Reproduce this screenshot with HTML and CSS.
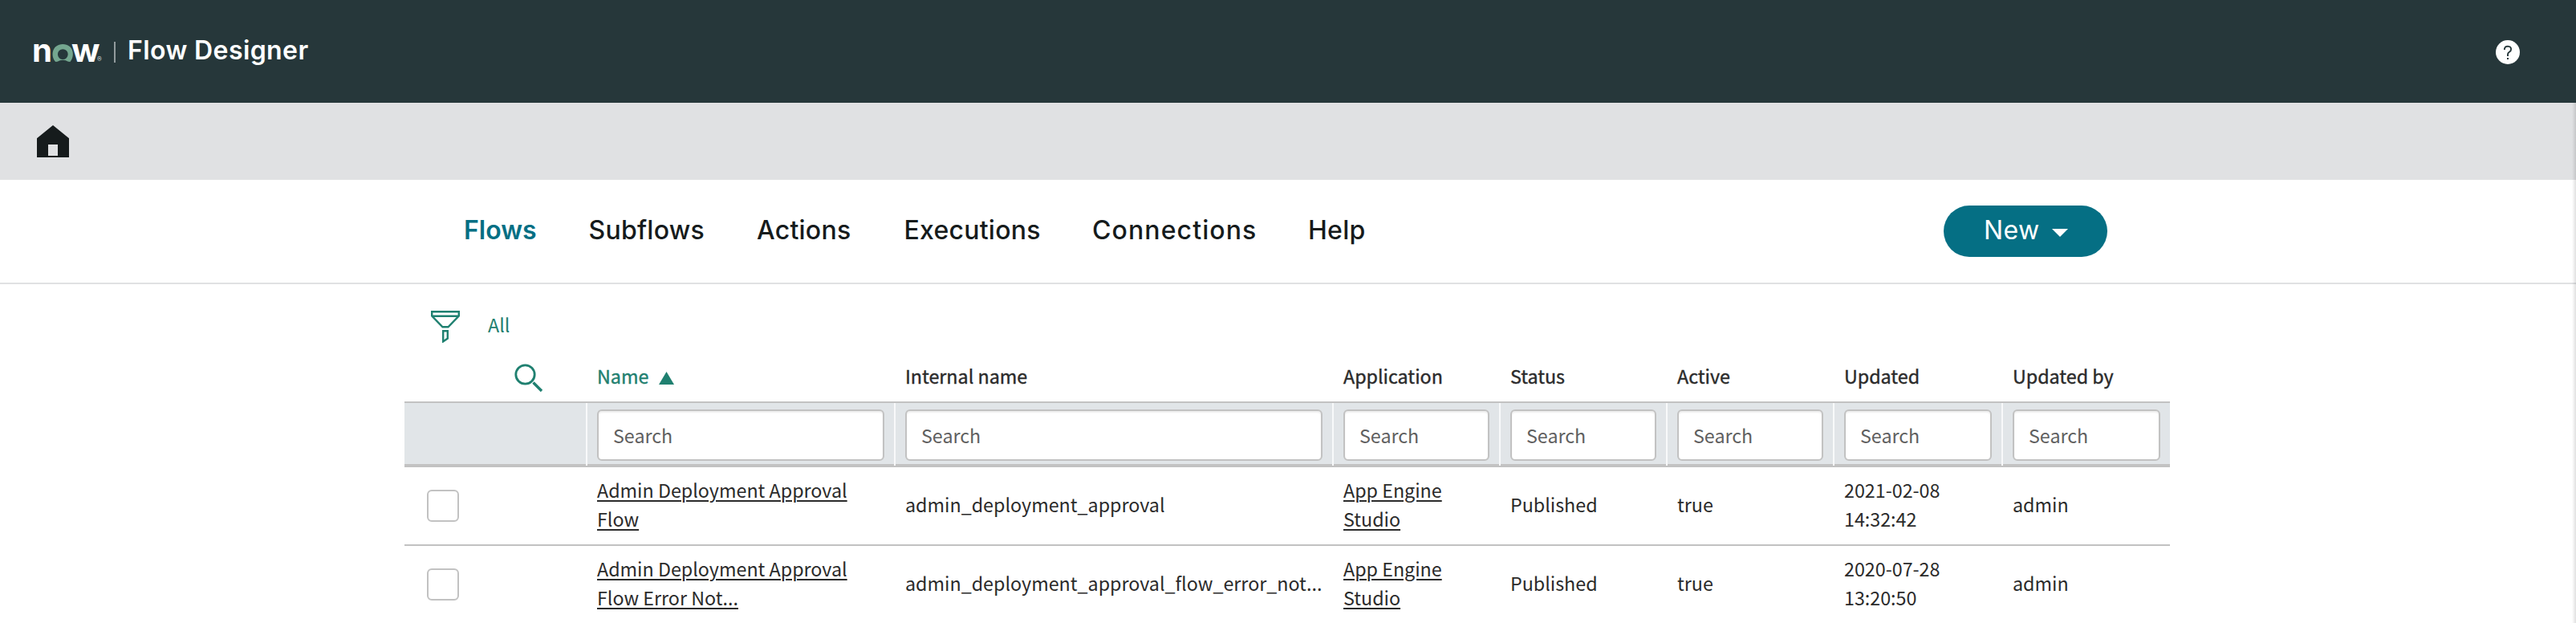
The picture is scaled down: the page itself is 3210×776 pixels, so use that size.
FILE: index.html
```html
<!DOCTYPE html>
<html lang="en">
<head>
<meta charset="utf-8">
<title>Flow Designer</title>
<link rel="stylesheet" href="styles.css">
</head>
<body>
<div class="app">
  <header class="banner">
    <div class="brand">
      <svg class="logo" width="90" height="40" viewBox="0 0 90 40">
        <text class="logo-letter" x="-2" y="27" textLength="25" lengthAdjust="spacingAndGlyphs">n</text>
        <path d="M27.2 27 C20.5 19.5 23 5 36.3 5 C49.5 5 52 19.5 45.4 27 L43 26.8 Q36.3 22.6 29.6 26.8 Z M36.3 11.2 A6.4 6.4 0 1 0 36.3 24 A6.4 6.4 0 1 0 36.3 11.2 Z" fill="#74a68f" fill-rule="evenodd"/>
        <text class="logo-letter" x="47" y="27" textLength="35.5" lengthAdjust="spacingAndGlyphs">w</text>
        <text class="logo-mark" x="79" y="27">®</text>
      </svg>
      <span class="brand-rule"></span>
      <h1 class="brand-title">Flow Designer</h1>
    </div>
    <svg class="help" width="30" height="30" viewBox="0 0 30 30">
      <circle cx="15" cy="15" r="15" fill="#fff"/>
      <path d="M10.9 12 V11.2 Q11.3 7.6 15 7.6 Q19.1 7.8 19.1 11.2 Q19.1 13.2 17.2 14.5 Q15 15.9 15 17.6 V20" fill="none" stroke="#26373a" stroke-width="1.9"/>
      <rect x="14" y="22" width="2" height="2" fill="#26373a"/>
    </svg>
  </header>

  <main class="workspace">
    <div class="tabstrip">
      <svg width="40" height="40" viewBox="0 0 40 40">
        <path d="M20 0 L40 16.3 V40 H0 V16.3 Z M14 24 V38 H26 V24 Z" fill="#161b1c" fill-rule="evenodd"/>
      </svg>
    </div>

    <div class="navbar">
      <nav class="tabs">
        <a class="tab tab-active">Flows</a>
        <a class="tab">Subflows</a>
        <a class="tab">Actions</a>
        <a class="tab">Executions</a>
        <a class="tab tab-connections">Connections</a>
        <a class="tab">Help</a>
      </nav>
      <button class="new-button">New
        <svg width="20" height="10" viewBox="0 0 20 10"><path d="M0 0 H20 L10 10 Z" fill="#fff"/></svg>
      </button>
    </div>

    <section class="list">
      <div class="filterbar">
        <svg width="36" height="40" viewBox="0 0 36 40" fill="none" stroke="#1f8070" stroke-width="2.4">
          <path d="M1.2 1.2 H34.8 V6.5 L21.5 20.3 H14.5 L1.2 6.5 Z M1.5 6.7 H34.5"/>
          <path d="M15.2 25.2 H20.8 V34.5 L15.2 38.4 Z"/>
        </svg>
        <a class="filter-all">All</a>
      </div>

      <div class="row head">
        <div class="cell search-toggle">
          <svg width="36" height="36" viewBox="0 0 36 36" fill="none" stroke="#1f8070">
            <circle cx="13.5" cy="13.5" r="11.7" stroke-width="2.8"/>
            <path d="M23.5 23.5 L34 34" stroke-width="3.4"/>
          </svg>
        </div>
        <div class="cell sorted">Name
          <svg width="19" height="16" viewBox="0 0 19 16"><path d="M9.5 0 L19 16 H0 Z" fill="#1f8070"/></svg>
        </div>
        <div class="cell">Internal name</div>
        <div class="cell">Application</div>
        <div class="cell">Status</div>
        <div class="cell">Active</div>
        <div class="cell">Updated</div>
        <div class="cell">Updated by</div>
      </div>

      <div class="row search">
        <div class="cell"></div>
        <div class="cell"><input class="field" placeholder="Search"></div>
        <div class="cell"><input class="field" placeholder="Search"></div>
        <div class="cell"><input class="field" placeholder="Search"></div>
        <div class="cell"><input class="field" placeholder="Search"></div>
        <div class="cell"><input class="field" placeholder="Search"></div>
        <div class="cell"><input class="field" placeholder="Search"></div>
        <div class="cell"><input class="field" placeholder="Search"></div>
      </div>

      <div class="row record">
        <div class="cell pick"><span class="checkbox"></span></div>
        <div class="cell"><a class="link">Admin Deployment Approval<br>Flow</a></div>
        <div class="cell">admin_deployment_approval</div>
        <div class="cell"><a class="link">App Engine<br>Studio</a></div>
        <div class="cell">Published</div>
        <div class="cell">true</div>
        <div class="cell"><span>2021-02-08<br>14:32:42</span></div>
        <div class="cell">admin</div>
      </div>

      <div class="row record">
        <div class="cell pick"><span class="checkbox"></span></div>
        <div class="cell"><a class="link">Admin Deployment Approval<br>Flow Error Not...</a></div>
        <div class="cell">admin_deployment_approval_flow_error_not...</div>
        <div class="cell"><a class="link">App Engine<br>Studio</a></div>
        <div class="cell">Published</div>
        <div class="cell">true</div>
        <div class="cell"><span>2020-07-28<br>13:20:50</span></div>
        <div class="cell">admin</div>
      </div>
    </section>
    <div class="edge-shadow"></div>
  </main>
</div>
</body>
</html>
```
FILE: styles.css
```css
* { box-sizing: border-box; }

body {
  margin: 0;
  background: #fff;
  color: #2b2b2b;
  font: 23.27px/36px "Noto Sans CJK SC", "Open Sans", sans-serif;
}

svg { display: block; flex: none; }

.app { height: 776px; overflow: hidden; }

/* Banner */
.banner {
  display: flex;
  justify-content: space-between;
  height: 128px;
  padding: 50px 70px 0 42px;
  background: #26373a;
}
.brand { display: flex; align-items: flex-start; }
.logo { overflow: visible; }
.logo-letter { font: 700 39.5px Inter, sans-serif; fill: #fff; }
.logo-mark { font: 8.5px Inter, sans-serif; fill: #c8cfd0; }
.brand-rule { width: 2px; height: 26px; margin: 2px 15px 0 10px; background: #929b9d; }
.brand-title {
  margin: -7px 0 0;
  color: #fff;
  font: 600 32px/40px Inter, sans-serif;
  letter-spacing: .4px;
}

/* Open-tab strip */
.workspace { position: relative; height: 648px; }
.tabstrip { height: 96px; padding: 28px 46px; background: #e0e1e3; }
.edge-shadow {
  position: absolute;
  top: 0;
  right: 0;
  bottom: 0;
  width: 5px;
  background: linear-gradient(to right, rgba(0, 0, 0, 0), rgba(0, 0, 0, .12));
}

/* Navigation */
.navbar {
  display: flex;
  align-items: center;
  justify-content: space-between;
  height: 130px;
  padding: 0 584px 0 578px;
  border-bottom: 2px solid #e0e1e3;
}
.tabs {
  display: grid;
  grid-template-columns: 155.5px 209.5px 183.5px 234.5px 269px auto;
  padding-bottom: 3px;
  color: #161b1c;
  font: 500 32px/40px Inter, sans-serif;
}
.tab { letter-spacing: .25px; }
.tab-active { color: #056f84; font-weight: 600; letter-spacing: 0; }
.tab-connections { letter-spacing: 1.1px; }
.new-button {
  display: flex;
  align-items: center;
  gap: 15px;
  width: 204px;
  height: 64px;
  padding: 0 0 2px 50px;
  border: 0;
  border-radius: 32px;
  background: #056f84;
  color: #fff;
  font: 400 32px/40px Inter, sans-serif;
  letter-spacing: .4px;
}
.new-button svg { margin-top: 5px; }

/* List */
.list { width: 2200px; margin-left: 504px; }
.filterbar {
  display: flex;
  align-items: center;
  gap: 35px;
  height: 86px;
  padding: 20px 0 0 33px;
  color: #1f8070;
}
.filter-all { margin-top: -7px; }

.row {
  display: grid;
  grid-template-columns: 228px 384px 546px 208px 208px 208px 210px 208px;
}
.cell { display: flex; align-items: center; padding-left: 12px; white-space: nowrap; }

.head { height: 60px; -webkit-text-stroke: .4px currentColor; }
.head .cell { padding-bottom: 4px; }
.head .search-toggle { padding: 1px 0 0 137px; }
.head .sorted { gap: 13px; color: #1f8070; }
.sorted svg { margin-top: 6px; }

.search {
  height: 82px;
  border-top: 2px solid #c2c2c2;
  border-bottom: 2px solid #c2c2c2;
  background: #e1e5e8;
}
.search .cell {
  align-items: flex-start;
  padding: 8px 12px 0 12px;
  border-right: 2px solid #f8f9fa;
  background: linear-gradient(#c2c2c2, #c2c2c2) bottom / 100% 2px no-repeat;
}
.search .cell:last-child { border-right: 0; }
.field {
  width: 100%;
  height: 64px;
  padding: 0 18px;
  border: 2px solid #c2c2c2;
  border-radius: 6px;
  background: #fff;
  box-shadow: inset 0 2px 2px rgba(0, 0, 0, .07);
  color: #2b2b2b;
  font: inherit;
}
.field::placeholder { color: #5f6060; opacity: 1; }

.record { height: 98px; border-bottom: 2px solid #c2c2c2; }
.record .cell { padding-bottom: 4px; }
.record .pick { padding: 0 0 0 28px; }
.checkbox {
  width: 40px;
  height: 40px;
  border: 2px solid #c2c2c2;
  border-radius: 6px;
  background: #fff;
}
.link {
  text-decoration: underline;
  text-decoration-thickness: 2px;
  text-underline-offset: 3px;
}
```
